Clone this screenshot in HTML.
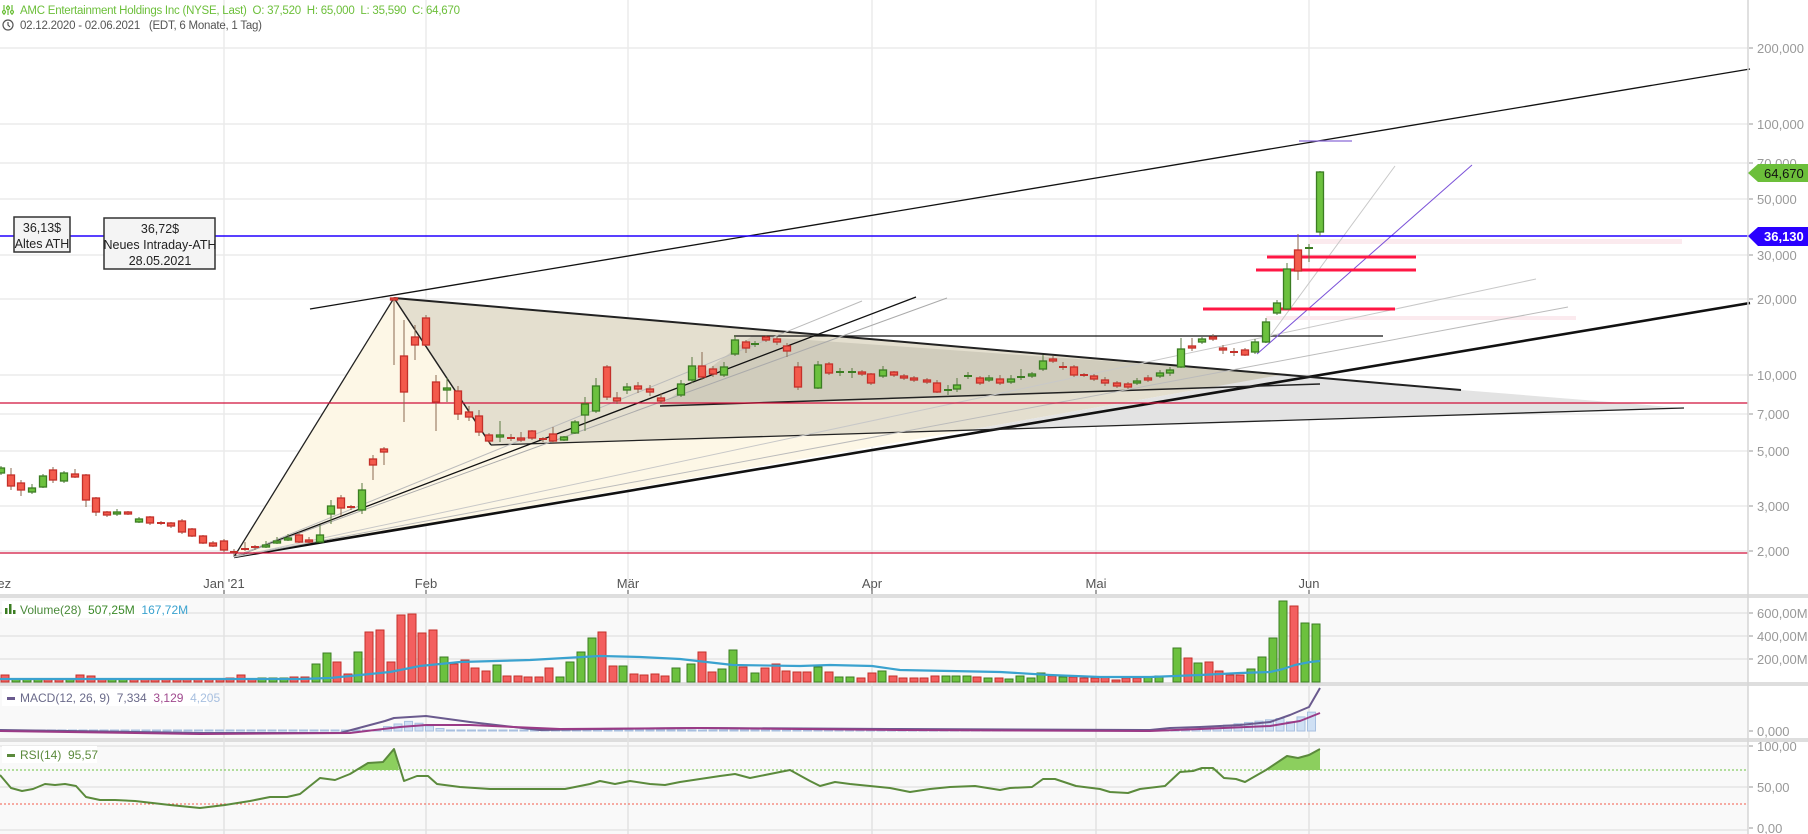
<!DOCTYPE html>
<html><head><meta charset="utf-8">
<style>
html,body{margin:0;padding:0;background:#fff;width:1808px;height:834px;overflow:hidden}
svg{display:block}
text{font-family:"Liberation Sans",sans-serif}
</style></head>
<body>
<svg id="s" width="1808" height="834" xmlns="http://www.w3.org/2000/svg"></svg>
<script>
var o=[];
function L(x1,y1,x2,y2,c,w,extra){o.push('<line x1="'+x1+'" y1="'+y1+'" x2="'+x2+'" y2="'+y2+'" stroke="'+c+'" stroke-width="'+(w||1)+'" '+(extra||'')+'/>');}
function R(x,y,w,h,f,s,sw){o.push('<rect x="'+x+'" y="'+y+'" width="'+w+'" height="'+h+'" fill="'+f+'"'+(s?' stroke="'+s+'" stroke-width="'+(sw||1)+'"':'')+'/>');}
function P(pts,f,s,sw,extra){o.push('<polygon points="'+pts+'" fill="'+f+'"'+(s?' stroke="'+s+'" stroke-width="'+sw+'"':'')+' '+(extra||'')+'/>');}
function PL(pts,c,w,extra){o.push('<polyline points="'+pts.map(function(p){return p.join(',')}).join(' ')+'" fill="none" stroke="'+c+'" stroke-width="'+w+'" stroke-linejoin="round" '+(extra||'')+'/>');}
function T(x,y,t,sz,c,extra){o.push('<text x="'+x+'" y="'+y+'" font-size="'+sz+'" fill="'+c+'" '+(extra||'')+'>'+t+'</text>');}

// panels backgrounds
R(0,598,1748,84,'#f9f9f9');R(0,686,1748,52,'#f9f9f9');R(0,742,1748,92,'#f9f9f9');
// separators
R(0,594,1808,4,'#dedede');R(0,682,1808,4,'#dedede');R(0,738,1808,4,'#dedede');
// main horizontal grid
var pg=[[48,'200,000'],[124,'100,000'],[163,'70,000'],[199,'50,000'],[255,'30,000'],[299,'20,000'],[375,'10,000'],[414,'7,000'],[451,'5,000'],[506,'3,000'],[551,'2,000']];
pg.forEach(function(g){L(0,g[0],1748,g[0],'#ebebeb',1.5);});
// vertical grid
var vx=[[224,"Jan '21"],[426,'Feb'],[628,'Mär'],[872,'Apr'],[1096,'Mai'],[1309,'Jun']];
vx.forEach(function(v){L(v[0],0,v[0],594,'#ebebeb',1.5);L(v[0],598,v[0],834,'#e2e2e2',1.5);});
// panel grids
[613,636,659].forEach(function(y){L(0,y,1748,y,'#e2e2e2',1.2);});
[746,787,830].forEach(function(y){L(0,y,1748,y,'#e2e2e2',1.2);});

// fills
P('234,557 394,298 491,445 963,431','#fdf7e6');
P('394,298 1286,374 963,431 491,445','#e4dfcf');
P('660,406 752,336 1290,374 1320,384','#d0ccbc');
P('963,431 1286,374 1461,390 1684,408','#e3e3e3');
// pink bands
R(1309,239,373,5,'#fbeaee');R(1266,316,310,4,'#fbeaee');
// lines
L(310,309,1750,69,'#111',1.3);
L(234,557,1750,303,'#111',2.6);
L(234,557,394,298,'#222',1.3);
L(394,298,491,445,'#222',1.5);
L(394,298,1461,390,'#222',2);
L(491,445,1684,408,'#222',1.3);
L(660,406,1320,384,'#222',1.5);
L(734,336,1383,336,'#111',1.3);
L(234,557,916,297,'#111',1.3);
L(234,557,947,298,'#aaa',1);
L(234,557,862,301,'#bbb',1);
L(234,557,1568,307,'#bbb',1);
L(234,557,1536,279,'#c8c8c8',1);
L(1265,343,1395,166,'#c8c8c8',1);
L(1257,354,1472,165,'#7b52d8',1);
L(1299,141,1352,141,'#8a6ad8',1.2);
// horizontal lines
L(0,236,1748,236,'#2200ff',1.5);
L(0,403,1748,403,'#d0103a',1.3);
L(0,553,1748,553,'#d0103a',1.3);
L(1267,257,1416,257,'#ff1744',3);
L(1256,270,1416,270,'#ff1744',3);
L(1203,309,1395,309,'#ff1744',3);

// candles [x,top,bot,color,wt,wb]
var C=[[1,468,473,'g'],[11,475,486,'r',468,490],[21,483,490,'r',480,496],[32,488,492,'g',484,494],[43,476,487,'g',474,488],[53,470,480,'r',467,483],[64,473,481,'g'],[75,474,477,'r',469,478],[86,475,500,'r',474,507],[96,498,512,'r',497,516],[107,512,515,'r',511,517],[117,512,514,'g',509,516],[128,512,514,'r',511,515],[139,519,522,'g',517,523],[150,517,523,'r',516,525],[161,523,524,'r',521,525],[171,523,526,'r',522,528],[182,521,532,'r'],[192,529,536,'r',528,537],[203,536,543,'r',535,544],[213,543,546,'r',541,547],[224,541,550,'r'],
[234,552,553,'r',549,556],[245,549,550,'r',542,551],[255,547,548,'r',545,550],[266,545,547,'g',541,548],[277,541,543,'g',537,544],[288,538,540,'g',534,541],[299,535,542,'r',532,543],[309,540,542,'r',537,543],[320,535,542,'g',525,543],[331,506,514,'g',500,524],[341,498,508,'r',495,516],[351,507,508,'r',505,510],[362,490,510,'g',483,514],[373,459,465,'r',455,480],[384,449,452,'r',447,465],[394,298,300,'r',297,365],[404,356,392,'r',320,422],[415,337,345,'r',325,360],[426,318,345,'r',315,346],[436,382,402,'r',375,431],[447,388,390,'g',378,402],[458,391,414,'r',386,420],[469,412,417,'r',406,421],[479,416,432,'r',410,436],[489,435,441,'r'],[500,435,437,'g',421,442],[511,438,439,'r',434,441],[521,438,440,'r',432,442],[532,431,438,'r',430,440],[543,439,440,'r',437,442],[553,434,441,'r',427,443],[564,437,440,'g',436,441],[575,422,433,'g',420,434],[585,404,415,'g',397,431],[596,386,411,'g',378,413],[607,367,397,'r',365,400],[617,398,401,'r',392,404],[627,387,390,'g',383,394],[638,386,389,'r',382,393],[650,389,392,'r',385,396],[661,398,401,'r',393,404],[681,384,395,'g',380,397],[692,366,380,'g',357,383],[702,366,377,'r',352,380],[713,369,374,'r',366,377],[724,367,375,'g',362,377],[735,340,354,'g',335,356],[746,342,348,'r',340,353],[755,344,345,'g',341,347],[766,337,340,'r',335,342],[777,339,342,'r',337,345],[787,346,351,'r',343,357],[798,367,387,'r',362,390],[818,365,388,'g',361,389],[829,364,373,'r',362,375],[840,372,373,'g',368,376],[852,372,373,'g',368,378],[862,372,374,'r',370,376],[871,374,383,'r',373,385],[883,370,376,'g',366,378],[894,372,375,'r',371,377],[904,376,378,'r',374,380],[914,378,380,'r',376,382],[927,380,382,'r',378,384],[937,383,392,'r',380,393],[948,390,391,'g',385,395],[957,385,389,'g',378,392],[968,376,377,'g',372,379],[980,378,383,'r',376,385],[989,378,380,'g',375,382],[1000,379,383,'r',375,385],[1011,379,382,'g',375,384],[1021,377,378,'g',369,380],[1032,374,376,'g',372,378],[1043,361,369,'g',355,371],[1053,359,361,'r',356,363],[1063,367,368,'r',362,370],[1074,367,375,'r',365,377],[1084,375,376,'r',373,377],[1094,376,379,'r',374,381],[1105,380,383,'r',377,386],[1117,383,386,'r',381,388],[1128,384,387,'r',382,389],[1137,381,383,'g',378,385],[1148,378,380,'r',375,382],[1160,373,376,'g',370,378],[1170,370,373,'g',367,376],[1181,349,367,'g',338,368],[1192,346,348,'r',338,351],[1202,339,342,'g',337,344],[1213,337,339,'r',334,341],[1223,348,350,'r',345,354],[1234,352,353,'r',348,356],[1245,350,355,'r',348,356],[1255,342,352,'g',339,354],[1266,322,342,'g',318,343],[1277,303,313,'g',300,315],[1287,269,309,'g',263,310],[1298,250,271,'r',234,280],[1309,248,249,'g',244,262],[1320,172,232,'g',171,236]];
C.forEach(function(c){var g=c[3]=='g',f=g?'#6cc13e':'#f35a4c',s=g?'#3b7d22':'#c4302a';var wt=c[4]||c[1]-2,wb=c[5]||c[2]+2;L(c[0],wt,c[0],wb,g?'#5a7a40':'#8a6a50',1);var h=c[2]-c[1];if(h<2){L(c[0]-4,c[1],c[0]+4,c[1],s,2);}else R(c[0]-3.5,c[1],7,h,f,s,1.3);});

// volume bars [x,h,c]
var V=[[5,7,'r'],[16,3,'g'],[27,3,'g'],[38,3,'g'],[48,3,'r'],[59,3,'r'],[70,3,'g'],[80,7,'r'],[91,6,'r'],[102,3,'r'],[112,3,'g'],[123,3,'g'],[134,3,'r'],[145,3,'r'],[155,3,'r'],[166,3,'r'],[177,3,'r'],[187,3,'r'],[198,3,'r'],[209,3,'r'],[220,3,'r'],[230,4,'r'],[241,7,'r'],[252,3,'r'],[262,4,'g'],[273,4,'g'],[284,4,'g'],[294,5,'r'],[305,5,'r'],[316,18,'g'],[327,29,'g'],[337,20,'r'],[348,8,'r'],[358,30,'g'],[369,50,'r'],[380,52,'r'],[391,20,'r'],[401,67,'r'],[412,68,'r'],[422,49,'r'],[433,52,'r'],[444,25,'g'],[454,18,'r'],[465,22,'r'],[475,14,'r'],[486,11,'r'],[497,17,'g'],[507,6,'r'],[518,6,'r'],[528,5,'r'],[539,5,'r'],[549,14,'r'],[560,5,'g'],[570,20,'g'],[581,30,'g'],[592,44,'g'],[602,50,'r'],[613,16,'r'],[623,16,'g'],[634,8,'r'],[644,7,'r'],[655,8,'r'],[665,6,'r'],[676,14,'g'],[691,18,'g'],[702,30,'r'],[712,10,'r'],[722,13,'g'],[733,32,'g'],[743,15,'r'],[755,9,'g'],[765,14,'r'],[776,18,'r'],[786,11,'r'],[797,10,'r'],[807,10,'r'],[818,15,'g'],[829,10,'r'],[839,5,'g'],[850,5,'g'],[861,4,'r'],[872,9,'r'],[882,11,'g'],[893,6,'r'],[903,4,'r'],[914,4,'r'],[924,4,'r'],[935,6,'r'],[946,6,'g'],[956,6,'g'],[967,6,'g'],[977,5,'r'],[988,4,'g'],[999,4,'r'],[1009,3,'g'],[1020,6,'g'],[1031,4,'g'],[1041,9,'g'],[1052,6,'r'],[1063,5,'g'],[1073,5,'r'],[1084,4,'r'],[1095,4,'r'],[1105,5,'r'],[1116,2,'r'],[1126,4,'r'],[1137,4,'r'],[1148,5,'g'],[1159,6,'g'],[1177,34,'g'],[1188,24,'r'],[1198,19,'g'],[1209,20,'r'],[1219,11,'r'],[1230,7,'r'],[1240,7,'r'],[1251,13,'g'],[1262,25,'g'],[1273,44,'g'],[1283,81,'g'],[1294,76,'r'],[1305,59,'g'],[1316,58,'g']];
V.forEach(function(v){var g=v[2]=='g';R(v[0]-4,682-v[1],8,v[1],g?'#6cc13e':'#f35f5f',g?'#3b7d22':'#c4302a',1);});
PL([[0,679],[300,679],[330,678],[370,674],[390,672],[420,666],[460,662],[530,660],[600,656],[640,657],[680,659],[733,665],[800,666],[830,665],[872,666],[900,670],[1000,672],[1050,675],[1100,677],[1150,677],[1200,675],[1240,673],[1270,672],[1283,669],[1295,665],[1310,662],[1320,661]],'#3aa2cf',2.2);

// MACD histogram
for(var x=20;x<1320;x+=10.5){var h=0;if(x>380&&x<470)h=Math.max(0,10-Math.abs(x-410)/4);if(x>1180)h=(x-1180)/8;if(x>1290)h=(x-1270)/2.2;if(x>1312)h=25;R(x-4,731-Math.max(h,1),8,Math.max(h,1),'#cfe0f4','#a8c0e0',1);}
PL([[0,730],[200,733],[340,733],[385,721],[394,718],[426,716],[470,722],[540,730],[600,729],[700,728],[900,729],[1150,730],[1170,728],[1200,727],[1240,725],[1270,722],[1290,715],[1309,707],[1320,688]],'#6a5a8e',2);
PL([[0,731],[200,734],[350,733],[400,727],[426,725],[470,725],[560,729],[700,728],[900,730],[1150,731],[1200,729],[1270,726],[1300,721],[1320,713]],'#9a3a86',2);

// RSI
L(0,770,1748,770,'#6cc13e',1,'stroke-dasharray="2,2"');
L(0,804,1748,804,'#f35a4c',1,'stroke-dasharray="2,2"');
var rsi=[[0,775],[11,788],[22,791],[33,789],[45,784],[55,785],[65,784],[76,786],[86,797],[100,800],[115,800],[135,801],[170,805],[200,808],[225,805],[250,801],[270,797],[287,797],[300,794],[320,778],[335,780],[350,774],[368,763],[383,762],[394,749],[404,781],[417,776],[428,776],[437,784],[460,787],[490,789],[565,789],[590,784],[600,781],[615,784],[630,781],[650,784],[665,785],[680,782],[700,779],[720,776],[735,774],[750,778],[765,775],[790,770],[810,781],[820,786],[835,782],[850,784],[870,786],[890,788],[910,792],[930,789],[950,787],[975,786],[1000,790],[1010,788],[1032,787],[1043,779],[1055,779],[1070,784],[1076,786],[1100,789],[1110,792],[1128,793],[1140,789],[1165,786],[1180,772],[1193,771],[1202,768],[1213,768],[1224,778],[1236,779],[1245,782],[1266,770],[1287,756],[1298,758],[1309,755],[1320,749]];
P('357,770 368,763 383,762 394,749 399,770','#8ccf5e');
P('1262,770 1266,770 1287,756 1298,758 1309,755 1320,749 1320,770','#8ccf5e');
PL(rsi,'#5b8a3c',2);

// right axis
L(1748,0,1748,834,'#d6d6d6',1.5);
pg.forEach(function(g){L(1749,g[0],1753,g[0],'#999',1);T(1757,g[0]+5,g[1],13,'#999');});
[[613,'600,00M'],[636,'400,00M'],[659,'200,00M']].forEach(function(g){L(1749,g[0],1753,g[0],'#999',1);T(1757,g[0]+5,g[1],13,'#999');});
L(1749,731,1753,731,'#999',1);T(1757,736,'0,000',13,'#999');
[[746,'100,00'],[787,'50,00'],[828,'0,00']].forEach(function(g){L(1749,g[0],1753,g[0],'#999',1);T(1757,g[0]+5,g[1],13,'#999');});
// price tags
P('1748,236 1758,227 1808,227 1808,246 1758,246','#2a00ff');T(1764,241,'36,130',13,'#fff','font-weight="bold"');
P('1748,173 1758,164 1808,164 1808,182 1758,182','#6cbf3a');T(1764,178,'64,670',13,'#111');
// x axis
vx.forEach(function(v){L(v[0],590,v[0],594,'#555',1);T(v[0],588,v[1],13,'#555','text-anchor="middle"');});
T(-12,588,'Dez',13,'#555');

// annotations
R(14,217,56,35,'#f4f4f4','#333',1.5);T(42,232,'36,13$',12.5,'#222','text-anchor="middle"');T(42,248,'Altes ATH',12.5,'#222','text-anchor="middle"');
R(104,218,111,51,'#f4f4f4','#333',1.5);T(160,233,'36,72$',12.5,'#222','text-anchor="middle"');T(160,249,'Neues Intraday-ATH',12.5,'#222','text-anchor="middle"');T(160,265,'28.05.2021',12.5,'#222','text-anchor="middle"');

// header
T(20,14,'AMC Entertainment Holdings Inc (NYSE, Last)  O: 37,520  H: 65,000  L: 35,590  C: 64,670',11.5,'#6cbf3a','xml:space="preserve" textLength="440"');
o.push('<g stroke="#6cbf3a" stroke-width="1.2" fill="none"><line x1="4" y1="5" x2="4" y2="15"/><line x1="8" y1="5" x2="8" y2="15"/><line x1="12" y1="5" x2="12" y2="15"/><circle cx="4" cy="12" r="1.5" fill="#fff"/><circle cx="8" cy="8" r="1.5" fill="#fff"/><circle cx="12" cy="12" r="1.5" fill="#fff"/></g>');
o.push('<circle cx="8" cy="25" r="5" fill="none" stroke="#555" stroke-width="1.2"/><path d="M8 22 V25 L10 27" fill="none" stroke="#555" stroke-width="1.2"/>');
T(20,29,'02.12.2020 - 02.06.2021   (EDT, 6 Monate, 1 Tag)',11.5,'#555','xml:space="preserve" textLength="242"');

// legends
R(2,601,178,17,'#fff');
o.push('<g fill="#3b7d22"><rect x="5" y="608" width="2.5" height="6"/><rect x="9" y="604" width="2.5" height="10"/><rect x="13" y="610" width="2.5" height="4"/></g>');
T(20,614,'Volume(28)  <tspan fill="#3b8a2a">507,25M</tspan>  <tspan fill="#3aa2cf">167,72M</tspan>',12,'#4a8a3a','xml:space="preserve"');
R(2,689,207,17,'#fff');R(7,697,8,3,'#6a5a8e');
T(20,702,'MACD(12, 26, 9)  7,334  <tspan fill="#a04a8e">3,129</tspan>  <tspan fill="#a8c0e0">4,205</tspan>',12,'#6a6a8a','xml:space="preserve"');
R(2,746,95,17,'#fff');R(7,754,8,3,'#5b8a3c');
T(20,759,'RSI(14)  95,57',12,'#5b8a3c','xml:space="preserve"');

document.getElementById('s').innerHTML=o.join('');
</script>
</body></html>
